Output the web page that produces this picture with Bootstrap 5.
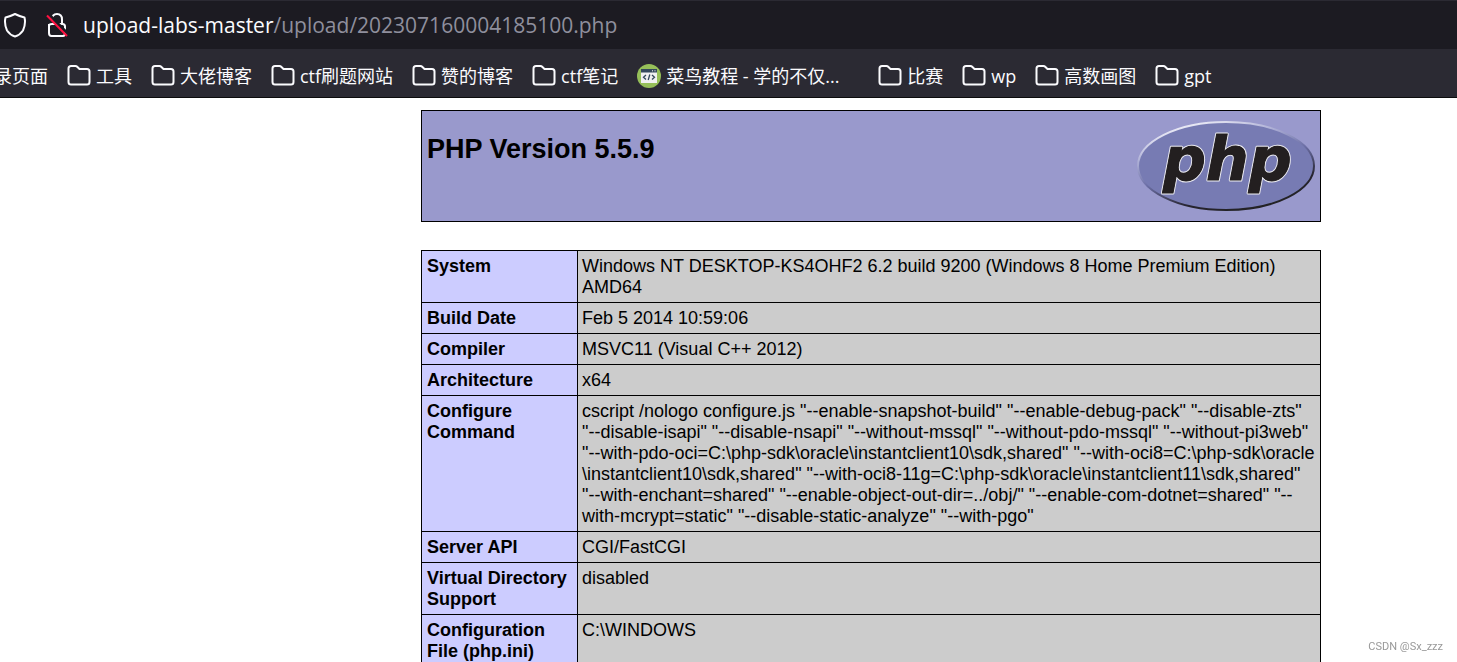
<!DOCTYPE html>
<html lang="zh-CN">
<head>
<meta charset="utf-8">
<meta name="viewport" content="width=device-width, initial-scale=1">
<title>phpinfo()</title>
<link href="https://cdn.jsdelivr.net/npm/bootstrap@5.3.0/dist/css/bootstrap.min.css" rel="stylesheet">
<style>
body { font-family: "Liberation Sans", Arial, sans-serif; font-size: 18px; line-height: 21px; color: #000; background: #fff; }
.browser-bar { font-family: "Open Sans", "Noto Sans CJK SC", sans-serif; color: #fbfbfe; }
.address-bar { height: 49px; background: #1c1b22; border-top: 1px solid #2b2a33; padding-left: 3px; }
.address-bar button { color: #fbfbfe; line-height: 0; }
.address-text { font-size: 21px; line-height: 28px; font-weight: 500; outline: 0; color: #fbfbfe; }
.address-path { color: #8f8f9d; }
.bookmarks { height: 49px; background: #2b2a33; border-bottom: 1px solid #0c0c0d; gap: 19px; margin: 0; padding-top: 5px; }
.bookmarks a { color: #fbfbfe; gap: 5px; line-height: 24px; }
.bookmarks .scrolled-item { margin-left: -6px; }
.bookmarks .wide-item { width: 222px; }
.info-page { display: grid; grid-template-columns: 421px minmax(0, 900px); padding-top: 12px; }
.info-body { grid-column: 2; }
.info-header { background: #9999cc; border: 1px solid #000; height: 112px; padding: 0 5px; margin-bottom: 28px; }
.info-header h1 { font-size: 27px; line-height: 32px; font-weight: 700; margin: 22px 0 0; }
.info-header svg { margin-top: 9px; }
.php-word { font-family: "DejaVu Sans", sans-serif; font-weight: 700; font-style: italic; font-size: 60px; }
.info-table { border-collapse: collapse; width: 100%; table-layout: fixed; }
.info-table th, .info-table td { border: 1px solid #000; padding: 5px 4px 4px 5px; vertical-align: top; text-align: left; }
.info-table th { background: #ccccff; width: 156px; }
.info-table td { background: #cccccc; padding-left: 4px; }
.watermark { font-family: Roboto, sans-serif; font-size: 11px; line-height: 14px; color: #999; right: 14px; bottom: 8px; }
</style>
</head>
<body class="vh-100 overflow-hidden">
<svg class="d-none" aria-hidden="true">
  <symbol id="folder" viewBox="0 0 24 24">
    <path d="M4 2h4.500q1 0 1.700.7l2.300 2.300h7.500q2.500 0 2.500 2.500v10.500q0 2.500-2.500 2.500H4q-2.500 0-2.500-2.500V4.500q0-2.500 2.500-2.500z" fill="none" stroke="#fbfbfe" stroke-width="2" stroke-linejoin="round"/>
  </symbol>
</svg>

<header class="browser-bar">
  <div class="address-bar d-flex align-items-center">
    <button class="btn border-0 p-0" type="button" aria-label="Tracking protection">
      <svg width="24" height="26" viewBox="0 0 24 26" fill="none" stroke="currentColor" stroke-width="2" stroke-linejoin="round"><path d="M12 2Q17 4.500 21.500 5.500Q23 12 20 18.500Q17 23 12 24.500Q7 23 4 18.500Q1 12 2.500 5.500Q7 4.500 12 2z"/></svg>
    </button>
    <button class="btn border-0 p-0 ms-3" type="button" aria-label="Connection is not secure">
      <svg width="28" height="26" viewBox="0 0 28 26" fill="none"><path d="M9 9V7.500Q9 2 14 2Q19 2 19 7.500V12" stroke="currentColor" stroke-width="2"/><path d="M6 12V21q0 3 2.500 3h11.500q2 0 2-3v-6.500q0-2.500-2.500-2.500H9Q6 12 6 14z" stroke="currentColor" stroke-width="2"/><path d="M5.500 2L26 23" stroke="#1c1b22" stroke-width="3"/><path d="M4 3.500L24 24" stroke="#ff1040" stroke-width="2"/></svg>
    </button>
    <div class="address-text text-nowrap ms-2 ps-1 flex-grow-1" role="textbox" contenteditable="true" spellcheck="false" aria-label="Address">upload-labs-master<span class="address-path">/upload/202307160004185100.php</span></div>
  </div>
  <nav class="bookmarks d-flex align-items-center text-nowrap overflow-hidden" aria-label="Bookmarks">
    <a class="scrolled-item d-flex flex-shrink-0 text-decoration-none" href="#">录页面</a>
    <a class="d-flex flex-shrink-0 text-decoration-none" href="#"><svg width="24" height="24"><use href="#folder"/></svg>工具</a>
    <a class="d-flex flex-shrink-0 text-decoration-none" href="#"><svg width="24" height="24"><use href="#folder"/></svg>大佬博客</a>
    <a class="d-flex flex-shrink-0 text-decoration-none" href="#"><svg width="24" height="24"><use href="#folder"/></svg>ctf刷题网站</a>
    <a class="d-flex flex-shrink-0 text-decoration-none" href="#"><svg width="24" height="24"><use href="#folder"/></svg>赞的博客</a>
    <a class="d-flex flex-shrink-0 text-decoration-none" href="#"><svg width="24" height="24"><use href="#folder"/></svg>ctf笔记</a>
    <a class="wide-item d-flex flex-shrink-0 text-decoration-none" href="#"><svg width="24" height="24" viewBox="0 0 24 24"><circle cx="12" cy="12" r="12" fill="#96bf59"/><path d="M4 5h16v14H4z" fill="#f1f1f1"/><path d="M4 5h16v3.500H4z" fill="#35495c"/><path d="M15 6.800h1M17.500 6.800h1" stroke="#fff"/><path d="M9 11l-2.500 2.300L9 15.500M15 11l2.500 2.300L15 15.500M12.800 10.500l-1.600 5.500" fill="none" stroke="#35495c" stroke-width="1.300"/></svg>菜鸟教程 - 学的不仅...</a>
    <a class="d-flex flex-shrink-0 text-decoration-none" href="#"><svg width="24" height="24"><use href="#folder"/></svg>比赛</a>
    <a class="d-flex flex-shrink-0 text-decoration-none" href="#"><svg width="24" height="24"><use href="#folder"/></svg>wp</a>
    <a class="d-flex flex-shrink-0 text-decoration-none" href="#"><svg width="24" height="24"><use href="#folder"/></svg>高数画图</a>
    <a class="d-flex flex-shrink-0 text-decoration-none" href="#"><svg width="24" height="24"><use href="#folder"/></svg>gpt</a>
  </nav>
</header>

<main class="info-page">
  <div class="info-body">
    <div class="info-header d-flex justify-content-between align-items-start">
      <h1>PHP Version 5.5.9</h1>
      <svg width="180" height="94" viewBox="0 0 180 94" role="img" aria-label="PHP logo">
        <defs>
          <linearGradient id="rim" x1="0.25" y1="0" x2="0.75" y2="1">
            <stop offset="0" stop-color="#f4f4fb"/><stop offset="0.28" stop-color="#a9abd3"/><stop offset="0.5" stop-color="#6c6fa6"/><stop offset="0.78" stop-color="#26242f"/><stop offset="1" stop-color="#222"/>
          </linearGradient>
        </defs>
        <ellipse cx="91" cy="46" rx="88" ry="44" fill="#777bb3" stroke="url(#rim)" stroke-width="2"/>
        <text class="php-word" x="28" y="60" fill="#231f20" stroke="#e8e8ee" stroke-width="3" paint-order="stroke" stroke-linejoin="round">php</text>
        <text class="php-word" x="28" y="60" fill="#231f20" stroke="#231f20" stroke-width="1" aria-hidden="true">php</text>
      </svg>
    </div>
    <table class="info-table">
      <tbody>
        <tr><th scope="row">System</th><td>Windows NT DESKTOP-KS4OHF2 6.2 build 9200 (Windows 8 Home Premium Edition) AMD64</td></tr>
        <tr><th scope="row">Build Date</th><td>Feb 5 2014 10:59:06</td></tr>
        <tr><th scope="row">Compiler</th><td>MSVC11 (Visual C++ 2012)</td></tr>
        <tr><th scope="row">Architecture</th><td>x64</td></tr>
        <tr><th scope="row">Configure Command</th><td>cscript /nologo configure.js "--enable-snapshot-build" "--enable-debug-pack" "--disable-zts" <br>"--disable-isapi" "--disable-nsapi" "--without-mssql" "--without-pdo-mssql" "--without-pi3web" <br>"--with-pdo-oci=C:\php-sdk\oracle\instantclient10\sdk,shared" "--with-oci8=C:\php-sdk\oracle<br>\instantclient10\sdk,shared" "--with-oci8-11g=C:\php-sdk\oracle\instantclient11\sdk,shared" <br>"--with-enchant=shared" "--enable-object-out-dir=../obj/" "--enable-com-dotnet=shared" "--<br>with-mcrypt=static" "--disable-static-analyze" "--with-pgo"</td></tr>
        <tr><th scope="row">Server API</th><td>CGI/FastCGI</td></tr>
        <tr><th scope="row">Virtual Directory Support</th><td>disabled</td></tr>
        <tr><th scope="row">Configuration File (php.ini)</th><td>C:\WINDOWS</td></tr>
      </tbody>
    </table>
  </div>
</main>
<div class="watermark position-fixed">CSDN @Sx_zzz</div>
<script src="https://cdn.jsdelivr.net/npm/bootstrap@5.3.0/dist/js/bootstrap.bundle.min.js"></script>
</body>
</html>
